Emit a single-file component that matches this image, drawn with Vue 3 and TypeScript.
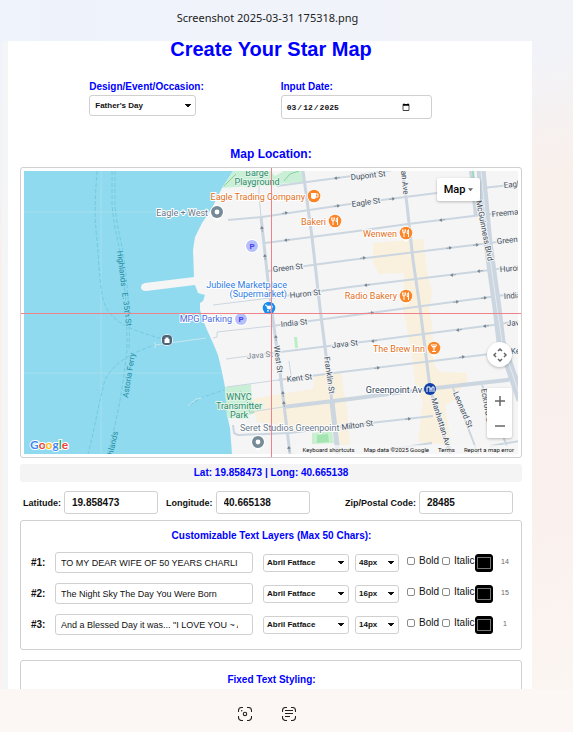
<script setup lang="ts">
import { ref } from 'vue'

interface TextLayer {
  id: number
  text: string
  font: string
  size: string
  bold: boolean
  italic: boolean
  color: string
  count: number
}

interface Road {
  d: string
  w: number
}

interface MapLabel {
  text: string
  x: number
  y: number
  angle?: number
  kind: string
  anchor?: 'start' | 'middle' | 'end'
}

interface Arrow {
  x: number
  y: number
  angle: number
}

const occasion = ref("Father's Day")
const eventDate = ref('2025-03-12')
const latitude = ref('19.858473')
const longitude = ref('40.665138')
const zip = ref('28485')

const occasions = ["Father's Day", "Mother's Day", 'Anniversary', 'Birthday']
const fonts = ['Abril Fatface', 'Lato', 'Roboto']
const sizes = ['14px', '16px', '48px']

const layers = ref<TextLayer[]>([
  { id: 1, text: 'TO MY DEAR WIFE OF 50 YEARS CHARLINE', font: 'Abril Fatface', size: '48px', bold: false, italic: false, color: '#000000', count: 14 },
  { id: 2, text: 'The Night Sky The Day You Were Born', font: 'Abril Fatface', size: '16px', bold: false, italic: false, color: '#000000', count: 15 },
  { id: 3, text: 'And a Blessed Day it was... "I LOVE YOU ~ ALWAYS', font: 'Abril Fatface', size: '14px', bold: false, italic: false, color: '#000000', count: 1 },
])

const roads: Road[] = [
  { d: 'M277 186L352 176L400 169', w: 2 },
  { d: 'M228 220L262 217L350 204L437 193L519 184', w: 2 },
  { d: 'M265 243L350 232L408 224L473 216L519 211', w: 2 },
  { d: 'M268 271L350 260L490 243L519 239', w: 2 },
  { d: 'M213 305L270 298', w: 1 },
  { d: 'M270 298L350 287L490 270L519 266', w: 2 },
  { d: 'M213 338L217 337L217 332L272 326', w: 1 },
  { d: 'M272 326L370 313L490 297L519 293', w: 2 },
  { d: 'M226 359L272 353', w: 1 },
  { d: 'M272 353L370 341L493 325L519 321', w: 2 },
  { d: 'M227 387L278 380', w: 1 },
  { d: 'M278 380L350 371L490 354L519 350', w: 2 },
  { d: 'M250 412L283 407', w: 1 },
  { d: 'M283 407L350 399L427 389L507 380L519 377', w: 4 },
  { d: 'M233 425L234 433L238 435L290 433L370 423L433 416', w: 2 },
  { d: 'M370 452L432 443M490 446L519 441', w: 2 },
  { d: 'M289 361L291 375', w: 1 },
  { d: 'M259 171L259 195L261 217', w: 1 },
  { d: 'M261 217L269 290L272 312L280 372L290 454', w: 3 },
  { d: 'M303 171L312 237L320 308L332 402', w: 3 },
  { d: 'M332 402L338 454', w: 5 },
  { d: 'M402 169L407 205L413 260L420 308L430 388', w: 3 },
  { d: 'M430 388L441 427L450 454', w: 3 },
  { d: 'M453 388L478 454M482 385L507 446', w: 2 },
  { d: 'M471 170L476 216', w: 4 },
  { d: 'M481 170L488 243L497 308L501 342L521 400', w: 9 },
]

const arrows: Arrow[] = [
  { x: 337, y: 178, angle: 172 }, { x: 337, y: 206, angle: -8 }, { x: 285, y: 213, angle: -8 },
  { x: 392, y: 199, angle: -8 }, { x: 287, y: 240, angle: 172 }, { x: 442, y: 220, angle: 172 },
  { x: 363, y: 258, angle: -8 }, { x: 449, y: 248, angle: -8 }, { x: 476, y: 245, angle: -8 },
  { x: 367, y: 285, angle: 172 }, { x: 453, y: 275, angle: 172 }, { x: 480, y: 271, angle: 172 },
  { x: 456, y: 302, angle: -8 }, { x: 484, y: 298, angle: -8 }, { x: 371, y: 313, angle: -8 },
  { x: 374, y: 341, angle: 172 }, { x: 459, y: 330, angle: 172 }, { x: 486, y: 326, angle: 172 },
  { x: 377, y: 368, angle: -8 }, { x: 462, y: 357, angle: -8 }, { x: 408, y: 419, angle: -8 },
  { x: 262, y: 229, angle: -97 }, { x: 265, y: 257, angle: -97 }, { x: 276, y: 338, angle: -97 },
  { x: 283, y: 394, angle: -97 }, { x: 284, y: 404, angle: -97 }, { x: 289, y: 449, angle: -97 },
]

const labels: MapLabel[] = [
  { text: 'Dupont St', x: 351, y: 180, angle: -6, kind: 'street' },
  { text: 'Eagle St', x: 352, y: 207, angle: -8, kind: 'street' },
  { text: 'Green St', x: 273, y: 272, angle: -6, kind: 'street' },
  { text: 'Huron St', x: 290, y: 298, angle: -6, kind: 'street' },
  { text: 'India St', x: 281, y: 327, angle: -6, kind: 'street' },
  { text: 'Java St', x: 247, y: 359, angle: -5, kind: 'street minor' },
  { text: 'Java St', x: 332, y: 348, angle: -6, kind: 'street' },
  { text: 'Kent St', x: 287, y: 382, angle: -6, kind: 'street' },
  { text: 'Milton St', x: 342, y: 430, angle: -8, kind: 'street' },
  { text: 'West St', x: 274, y: 346, angle: 83, kind: 'street' },
  { text: 'Franklin St', x: 324, y: 357, angle: 82, kind: 'street' },
  { text: 'Manhattan Ave', x: 431, y: 399, angle: 73, kind: 'street' },
  { text: 'Leonard St', x: 453, y: 393, angle: 67, kind: 'street' },
  { text: 'Eckford St', x: 481, y: 389, angle: 80, kind: 'street' },
  { text: 'an Ave', x: 401, y: 171, angle: 84, kind: 'street' },
  { text: 'McGuinness Blvd', x: 476, y: 201, angle: 79, kind: 'street' },
  { text: 'Eagle St', x: 504, y: 188, angle: -6, kind: 'street' },
  { text: 'Freeman St', x: 492, y: 217, angle: -6, kind: 'street' },
  { text: 'Green St', x: 497, y: 244, angle: -6, kind: 'street' },
  { text: 'Huron St', x: 500, y: 272, angle: -4, kind: 'street' },
  { text: 'India St', x: 504, y: 299, angle: -4, kind: 'street' },
  { text: 'Java St', x: 507, y: 326, angle: -4, kind: 'street' },
  { text: 'Kent St', x: 511, y: 354, angle: -4, kind: 'street' },
  { text: 'Barge', x: 257, y: 176, kind: 'park', anchor: 'middle' },
  { text: 'Playground', x: 257, y: 185, kind: 'park', anchor: 'middle' },
  { text: 'WNYC', x: 239, y: 400, kind: 'park', anchor: 'middle' },
  { text: 'Transmitter', x: 239, y: 409, kind: 'park', anchor: 'middle' },
  { text: 'Park', x: 239, y: 418, kind: 'park', anchor: 'middle' },
  { text: 'Eagle + West', x: 208, y: 216, kind: 'place', anchor: 'end' },
  { text: 'Seret Studios Greenpoint', x: 240, y: 431, kind: 'place' },
  { text: 'Greenpoint Av', x: 422, y: 393, kind: 'transit', anchor: 'end' },
  { text: 'Eagle Trading Company', x: 305, y: 200, kind: 'food', anchor: 'end' },
  { text: 'Bakeri', x: 326, y: 225, kind: 'food', anchor: 'end' },
  { text: 'Wenwen', x: 397, y: 237, kind: 'food', anchor: 'end' },
  { text: 'Radio Bakery', x: 397, y: 299, kind: 'food', anchor: 'end' },
  { text: 'The Brew Inn', x: 425, y: 352, kind: 'food', anchor: 'end' },
  { text: 'Jubilee Marketplace', x: 287, y: 288, kind: 'shop', anchor: 'end' },
  { text: '(Supermarket)', x: 287, y: 297, kind: 'shop', anchor: 'end' },
  { text: 'MPG Parking', x: 232, y: 322, kind: 'parking', anchor: 'end' },
  { text: 'Highlands · E. 35th St', x: 117, y: 251, angle: 83, kind: 'ferry' },
  { text: 'Astoria Ferry', x: 128, y: 398, angle: -81, kind: 'ferry' },
  { text: 'Highlands', x: 110, y: 467, angle: -77, kind: 'ferry' },
]

const forkPins = [
  { x: 335, y: 221 },
  { x: 406, y: 233 },
  { x: 406, y: 296 },
]

function rotate(l: MapLabel): string | undefined {
  return l.angle ? `rotate(${l.angle} ${l.x} ${l.y})` : undefined
}
</script>

<template>
  <div class="viewer">
    <header class="titlebar">Screenshot 2025-03-31 175318.png</header>

    <main class="sheet">
      <h1>Create Your Star Map</h1>

      <div class="basics">
        <div class="stack">
          <label for="occasion">Design/Event/Occasion:</label>
          <select id="occasion" v-model="occasion" class="occasion">
            <option v-for="o in occasions" :key="o">{{ o }}</option>
          </select>
        </div>
        <div class="stack">
          <label for="date">Input Date:</label>
          <input id="date" v-model="eventDate" type="date" class="date" />
        </div>
      </div>

      <h2 class="map-title">Map Location:</h2>
      <div class="frame">
        <div class="canvas">
          <svg class="map" viewBox="24 171 494 283" preserveAspectRatio="xMidYMid slice" role="img" aria-label="Map">
            <rect x="24" y="171" width="496" height="284" fill="#8fdaee" />
            <path d="M101 171V454M24 212H240M24 373H224" stroke="#a3dfef" fill="none" />
            <g class="routes">
              <path d="M97 171C95 200 94 215 97 240C100 280 101 300 107 309C118 327 140 332 162 339" />
              <path d="M112 171V205C114 230 119 242 122 265C127 300 127 330 127 350C123 385 118 420 107 454" />
              <path d="M115 171V205C117 230 122 242 125 265C129 300 130 330 129 350" />
              <path d="M157 344C135 352 115 360 105 380C98 405 95 428 88 454" />
              <path d="M190 405L203 397L224 390" />
            </g>
            <path d="M188 406L196 399L202 398M155 342V348M155 345L206 338" stroke="#c9e6ef" fill="none" />
            <path fill="#f5f5f5" d="M233 171L222 188L212 208L202 223L195 237L193 250L194 277L145 283Q141 284 141 287Q141 291 146 291L195 285L198 293L205 295L203 301L200 303L200 310L203 320L207 330L213 343L218 355L222 372L225 387L227 415L230 428L232 454H519V171Z" />
            <path fill="#c9efd6" d="M233 171L222 188L303 182L302 171Z" />
            <path d="M270 171L275 176L284 171" fill="#f5f5f5" />
            <path d="M224 186L236 174M284 181L290 174L299 171" fill="none" stroke="#8bcf9f" />
            <path fill="#c9efd6" d="M225 387L251 384L252 405L255 413L240 418L227 418Z" />
            <path d="M240 391L247 401L250 413L255 412" fill="none" stroke="#a2d9b2" />
            <g fill="#f9f0dd">
              <path d="M373 243L423 239L428 277L432 293L429 310L432 325L434 365L440 372L467 373L467 383L457 392L458 398L445 405L451 445L418 442L423 402L415 382L412 355L403 308L404 273L379 274L373 262Z" />
              <path d="M251 399L313 389L315 375L341 373L343 388L347 408L350 444L335 447L335 430L312 432L290 432L288 425L257 422Z" />
            </g>
            <path fill="#b9efc3" d="M294 337L297 337L298 348L295 348Z" />
            <path fill="#c9efd0" d="M312 433L332 431L334 443L312 444Z" />
            <path fill="#a3e5b0" d="M317 435L328 434L329 442L317 443Z" />
            <path v-for="r in roads" :key="r.d" :d="r.d" :stroke-width="r.w" class="road" />
            <path d="M481 171L488 243L497 308L502 342L521 400" fill="none" stroke="#e4eaf0" />
            <path d="M473 171L474 182" stroke="#9bdcb8" stroke-width="2" />
            <path
              v-for="a in arrows"
              :key="`${a.x}-${a.y}`"
              :transform="`translate(${a.x} ${a.y}) rotate(${a.angle})`"
              d="M-3 0H1M0.5 -1.4L2.5 0L0.5 1.4Z"
              fill="#6f7c89"
              stroke="#6f7c89"
              stroke-width="0.5"
            />
            <text
              v-for="l in labels"
              :key="`${l.text}-${l.x}`"
              :x="l.x"
              :y="l.y"
              :class="['label', l.kind]"
              :text-anchor="l.anchor ?? 'start'"
              :transform="rotate(l)"
            >{{ l.text }}</text>

            <g v-for="p in [{ x: 217, y: 212 }, { x: 258, y: 442 }]" :key="p.y" :transform="`translate(${p.x} ${p.y})`">
              <path d="M-7 0A7 7 0 1 1 7 0C7 4 3 6 0 9C-3 6 -7 4 -7 0Z" fill="#fff" />
              <circle r="6" fill="#768b98" />
              <circle r="2.4" fill="#fff" />
            </g>
            <g transform="translate(314 196)">
              <path d="M-7 0A7 7 0 1 1 7 0C7 4 3 6 0 9C-3 6 -7 4 -7 0Z" fill="#fff" />
              <circle r="6.3" fill="#fb8527" />
              <path d="M-3 -3H2V1Q2 3 0 3H-1Q-3 3 -3 1Z" fill="#fff" />
              <path d="M2 -2H4V1H2" fill="none" stroke="#fff" />
            </g>
            <g v-for="p in forkPins" :key="`${p.x}-${p.y}`" :transform="`translate(${p.x} ${p.y})`">
              <path d="M-7 0A7 7 0 1 1 7 0C7 4 3 6 0 9C-3 6 -7 4 -7 0Z" fill="#fff" />
              <circle r="6.3" fill="#fb8527" />
              <path d="M-2 -3.5V4M-3.5 -3.5V-1.5Q-3.5 0 -2 0Q-0.5 0 -0.5 -1.5V-3.5M2.5 4V-3.5Q1 -2.5 1 0.5H2.5" fill="none" stroke="#fff" />
            </g>
            <g transform="translate(434 348)">
              <path d="M-7 0A7 7 0 1 1 7 0C7 4 3 6 0 9C-3 6 -7 4 -7 0Z" fill="#fff" />
              <circle r="6.3" fill="#fb8527" />
              <path d="M-3 -3H3L0 0.5ZM0 0V3.5M-2 3.5H2M-2 -1.5H2" fill="none" stroke="#fff" />
            </g>
            <g v-for="p in [{ x: 252, y: 246 }, { x: 241, y: 319 }]" :key="`p${p.x}`" :transform="`translate(${p.x} ${p.y})`">
              <circle r="7" fill="#fff" />
              <circle r="6" fill="#b5c0fb" />
              <text y="3" text-anchor="middle" class="pmark">P</text>
            </g>
            <g transform="translate(269 308)">
              <path d="M-7 0A7 7 0 1 1 7 0C7 4 3 6 0 9C-3 6 -7 4 -7 0Z" fill="#fff" />
              <circle r="6.3" fill="#1a8cf0" />
              <path d="M-4 -3H-2.6L-1.4 1H2.6L3.6 -2H-2Z" fill="#fff" stroke="#fff" stroke-width="0.6" />
              <circle cx="-1" cy="2.8" r="0.9" fill="#fff" />
              <circle cx="2.2" cy="2.8" r="0.9" fill="#fff" />
            </g>
            <g transform="translate(167 340)">
              <circle r="6" fill="#e6f3f7" />
              <rect x="-5" y="-5" width="10" height="10" rx="4" fill="#4d6275" />
              <path d="M-2.5 -1H2.5V3H-2.5ZM-1.5 -2.5H1.5V-1H-1.5Z" fill="#fff" />
            </g>
            <g transform="translate(430 389)">
              <circle r="6" fill="#1140a6" />
              <path d="M-3 3V-2H0V3M2 3V-2H4V3M0 0H2" fill="none" stroke="#fff" />
            </g>
            <text x="30" y="449" class="logo"><tspan fill="#4285f4">G</tspan><tspan fill="#ea4335">o</tspan><tspan fill="#fbbc05">o</tspan><tspan fill="#4285f4">g</tspan><tspan fill="#34a853">l</tspan><tspan fill="#ea4335">e</tspan></text>
          </svg>

          <button type="button" class="map-type">
            Map
            <svg viewBox="0 0 6 4" width="5" height="4" aria-hidden="true"><path d="M0 0H6L3 3.5Z" fill="#666" /></svg>
          </button>
          <button type="button" class="pan" aria-label="Map camera controls">
            <svg viewBox="0 0 16 16" width="16" height="16" fill="none" stroke="#666" stroke-width="1.5" aria-hidden="true">
              <path d="M6 4L8 2L10 4M6 12L8 14L10 12M4 6L2 8L4 10M12 6L14 8L12 10" />
            </svg>
          </button>
          <div class="zoom">
            <button type="button" aria-label="Zoom in">
              <svg viewBox="0 0 12 12" width="12" height="12" aria-hidden="true"><path d="M6 1V11M1 6H11" stroke="#666" stroke-width="1.5" /></svg>
            </button>
            <button type="button" aria-label="Zoom out">
              <svg viewBox="0 0 12 12" width="12" height="12" aria-hidden="true"><path d="M1 6H11" stroke="#666" stroke-width="1.5" /></svg>
            </button>
          </div>
          <div class="credits">
            <button type="button">Keyboard shortcuts</button>
            <span>Map data ©2025 Google</span>
            <a href="#terms">Terms</a>
            <a href="#report">Report a map error</a>
          </div>
        </div>
        <div class="cross-v"></div>
        <div class="cross-h"></div>
      </div>

      <p class="coords">Lat: {{ latitude }} | Long: {{ longitude }}</p>

      <div class="position">
        <div class="field">
          <label for="lat">Latitude:</label>
          <input id="lat" v-model="latitude" type="text" />
        </div>
        <div class="field">
          <label for="lng">Longitude:</label>
          <input id="lng" v-model="longitude" type="text" />
        </div>
        <div class="field last">
          <label for="zip">Zip/Postal Code:</label>
          <input id="zip" v-model="zip" type="text" />
        </div>
      </div>

      <section class="box">
        <h3>Customizable Text Layers (Max 50 Chars):</h3>
        <div v-for="layer in layers" :key="layer.id" class="layer">
          <label class="num" :for="`text-${layer.id}`">#{{ layer.id }}:</label>
          <input :id="`text-${layer.id}`" v-model="layer.text" type="text" maxlength="50" class="text" />
          <select v-model="layer.font" class="font" :aria-label="`Font of layer ${layer.id}`">
            <option v-for="f in fonts" :key="f">{{ f }}</option>
          </select>
          <select v-model="layer.size" class="size" :aria-label="`Size of layer ${layer.id}`">
            <option v-for="s in sizes" :key="s">{{ s }}</option>
          </select>
          <div class="checks">
            <label><input v-model="layer.bold" type="checkbox" />Bold</label>
            <label><input v-model="layer.italic" type="checkbox" />Italic</label>
          </div>
          <input v-model="layer.color" type="color" :aria-label="`Color of layer ${layer.id}`" />
          <span class="count">{{ layer.count }}</span>
        </div>
      </section>

      <section class="box fixed-text">
        <h3>Fixed Text Styling:</h3>
      </section>
    </main>

    <footer class="tools">
      <button type="button" aria-label="Visual search">
        <svg viewBox="0 0 14 14" width="14" height="14" fill="none" stroke="#222" stroke-width="1.1" aria-hidden="true">
          <path d="M5 0.5H3.5Q0.5 0.5 0.5 3.5V5M9 0.5H10.5Q13.5 0.5 13.5 3.5V5M13.5 9V10.5Q13.5 13.5 10.5 13.5H9M5 13.5H3.5Q0.5 13.5 0.5 10.5V9" />
          <circle cx="7" cy="7" r="1.7" />
          <circle cx="3.7" cy="3.7" r="0.7" fill="#222" stroke="none" />
        </svg>
      </button>
      <button type="button" aria-label="Scan text">
        <svg viewBox="0 0 14 14" width="14" height="14" fill="none" stroke="#222" stroke-width="1.1" aria-hidden="true">
          <path d="M5 0.5H3.5Q0.5 0.5 0.5 3.5V5M9 0.5H10.5Q13.5 0.5 13.5 3.5V5M13.5 9V10.5Q13.5 13.5 10.5 13.5H9M5 13.5H3.5Q0.5 13.5 0.5 10.5V9M3 3.5H11M3 6.5H11M3 9.5H8" />
        </svg>
      </button>
    </footer>
  </div>
</template>

<style>
body {
  margin: 0;
}
</style>

<style scoped>
* {
  box-sizing: border-box;
}

.viewer {
  display: grid;
  grid-template-rows: 41px minmax(0, 1fr) 43px;
  height: 100vh;
  overflow: hidden;
  background: linear-gradient(170deg, #eef3fd 0%, #f2f3f8 18%, #f9f0ec 32%, #faf1ee 75%, #fcf7f4 100%);
  font-family: "Liberation Sans", Arial, sans-serif;
  color: #111;
}

.titlebar {
  padding: 9px 38px 0 0;
  text-align: center;
  font: 11px/18px "Noto Sans", "Open Sans", sans-serif;
  color: #222;
  background: linear-gradient(90deg, #eef3fc, #f2f3f8);
}

.sheet {
  margin: 0 41px 0 2px;
  padding: 0 10px 0 12px;
  border-left: 6px solid #f4f5f6;
  background: #fff;
  overflow: hidden;
}

h1,
h2,
h3,
p {
  margin: 0;
  text-align: center;
  font-weight: bold;
  color: #00f;
}

h1 {
  font-size: 20px;
  line-height: 16px;
}

.basics {
  display: flex;
  justify-content: center;
  gap: 77px;
  margin-top: 24px;
  padding-right: 21px;
}

.stack {
  display: flex;
  flex-direction: column;
  align-items: flex-start;
  gap: 2px;
  height: 38px;
  font-size: 10px;
  line-height: 12px;
  font-weight: bold;
  color: #00f;
}

select,
input {
  margin: 0;
  border: 1px solid #d0d0d0;
  border-radius: 3px;
  background-color: #fff;
  font: 9px "Liberation Sans", Arial, sans-serif;
  color: #111;
}

select {
  appearance: none;
  height: 18px;
  padding: 0 14px 0 3px;
  font-weight: bold;
  font-size: 8px;
  background-image: linear-gradient(to bottom left, #111 50%, transparent 51%), linear-gradient(to bottom right, #111 50%, transparent 51%);
  background-size: 3px 4px;
  background-position: right 7px center, right 4px center;
  background-repeat: no-repeat;
}

.occasion {
  width: 107px;
  height: 21px;
  padding-left: 5px;
}

.date {
  width: 151px;
  height: 24px;
  padding: 0 19px 0 4px;
  font-family: "Liberation Mono", monospace;
  font-size: 8px;
  font-weight: bold;
}

.map-title {
  margin: 28px 0 6px;
  font-size: 12px;
  line-height: 14px;
}

.frame {
  position: relative;
  padding: 3px;
  border: 1px solid #d0d0d0;
  border-radius: 3px;
}

.cross-v,
.cross-h {
  position: absolute;
  background: #ee8288;
  pointer-events: none;
}

.cross-v {
  top: 0;
  bottom: 0;
  left: 50%;
  width: 1px;
}

.cross-h {
  left: 0;
  right: 0;
  top: 50%;
  height: 1px;
}

.canvas {
  position: relative;
  overflow: hidden;
}

.map {
  display: block;
  width: 100%;
  height: auto;
}

.road {
  fill: none;
  stroke: #cbd6e0;
  stroke-linejoin: round;
}

.routes path {
  fill: none;
  stroke: #74c9df;
  stroke-dasharray: 4 2;
}

.label {
  font-family: Roboto, sans-serif;
  font-size: 8px;
  paint-order: stroke;
  stroke: #fff;
  stroke-width: 2px;
  stroke-linejoin: round;
}

.street {
  fill: #404e5e;
  stroke: #f5f5f5;
}

.minor {
  fill: #768290;
}

.park {
  fill: #2d8c6a;
  font-size: 9px;
  stroke: #e3f5e9;
}

.place {
  fill: #66788a;
  font-size: 9px;
}

.transit {
  fill: #34475e;
  font-size: 9px;
}

.food {
  fill: #e2711d;
  font-size: 9px;
}

.shop {
  fill: #2c7be5;
  font-size: 9px;
}

.parking {
  fill: #4a6ae0;
  font-size: 9px;
}

.ferry {
  fill: #1c8ba3;
  stroke: #8fdaee;
}

.pmark {
  font: bold 8px Roboto, sans-serif;
  fill: #4a3df0;
}

.logo {
  font: bold 12px Lato, sans-serif;
  paint-order: stroke;
  stroke: #fff;
  stroke-width: 2px;
}

button {
  padding: 0;
  border: 0;
  background: none;
  color: inherit;
  font: inherit;
}

.map-type,
.pan,
.zoom {
  position: absolute;
  display: flex;
  align-items: center;
  justify-content: center;
  background: #fff;
  border-radius: 2px;
  box-shadow: 0 1px 3px rgba(0, 0, 0, 0.25);
}

.map-type {
  top: 7px;
  right: 38px;
  width: 43px;
  height: 23px;
  gap: 3px;
  font: 500 11px Roboto, sans-serif;
  color: #000;
}

.pan {
  right: 6px;
  bottom: 87px;
  width: 25px;
  height: 25px;
  border-radius: 50%;
}

.zoom {
  right: 6px;
  bottom: 16px;
  flex-direction: column;
  width: 25px;
  height: 50px;
}

.zoom button {
  display: flex;
  align-items: center;
  justify-content: center;
  width: 25px;
  height: 25px;
}

.credits {
  position: absolute;
  right: 0;
  bottom: 0;
  display: flex;
  gap: 9px;
  padding: 0 4px;
  font: 6px/9px Roboto, sans-serif;
  color: #111;
  background: rgba(245, 245, 245, 0.75);
}

.credits a {
  color: inherit;
  text-decoration: none;
}

.coords {
  margin-top: 6px;
  border-radius: 3px;
  background: #f4f4f4;
  font-size: 10px;
  line-height: 18px;
}

.position {
  display: flex;
  gap: 8px;
  margin: 9px 9px 6px 3px;
}

.field {
  display: flex;
  align-items: center;
  gap: 3px;
  font-size: 9px;
  font-weight: bold;
}

.last {
  margin-left: auto;
}

.field input {
  width: 94px;
  height: 23px;
  padding: 0 7px;
  font-size: 10px;
  font-weight: bold;
}

.box {
  display: flex;
  flex-direction: column;
  gap: 10px;
  padding: 9px 9px 14px 10px;
  border: 1px solid #d0d0d0;
  border-radius: 3px;
}

.fixed-text {
  min-height: 120px;
  margin-top: 10px;
  padding-top: 13px;
}

h3 {
  font-size: 10px;
  line-height: 12px;
}

.layer {
  display: flex;
  align-items: center;
  height: 21px;
}

.num {
  width: 24px;
  font-size: 10px;
  font-weight: bold;
}

.text {
  flex: 1;
  min-width: 0;
  height: 21px;
  margin-right: 10px;
  padding: 0 14px 0 5px;
}

.font {
  width: 86px;
  margin-right: 6px;
}

.size {
  width: 44px;
  margin-right: 8px;
}

.checks {
  display: flex;
  gap: 3px;
  width: 68px;
  padding-bottom: 4px;
  font-size: 10px;
  line-height: 12px;
}

.checks label {
  display: flex;
  align-items: center;
  gap: 4px;
}

input[type="checkbox"] {
  appearance: none;
  width: 8px;
  height: 8px;
  border-color: #8a8a8a;
  border-radius: 2px;
}

input[type="checkbox"]:checked {
  background: #1a73e8;
}

input[type="color"] {
  appearance: none;
  width: 18px;
  height: 18px;
  padding: 2px 1px;
  border-color: #000;
  background: #000;
}

input[type="color"]::-webkit-color-swatch-wrapper {
  padding: 0;
}

input[type="color"]::-webkit-color-swatch {
  border: 1px solid #777;
  border-radius: 0;
}

.count {
  width: 14px;
  margin-left: 5px;
  padding-bottom: 3px;
  text-align: center;
  font-size: 7px;
  color: #666;
}

.tools {
  display: flex;
  justify-content: center;
  align-items: center;
  gap: 30px;
  padding: 7px 39px 0 0;
  background: #fcf7f4;
}

.tools button {
  display: flex;
}
</style>
